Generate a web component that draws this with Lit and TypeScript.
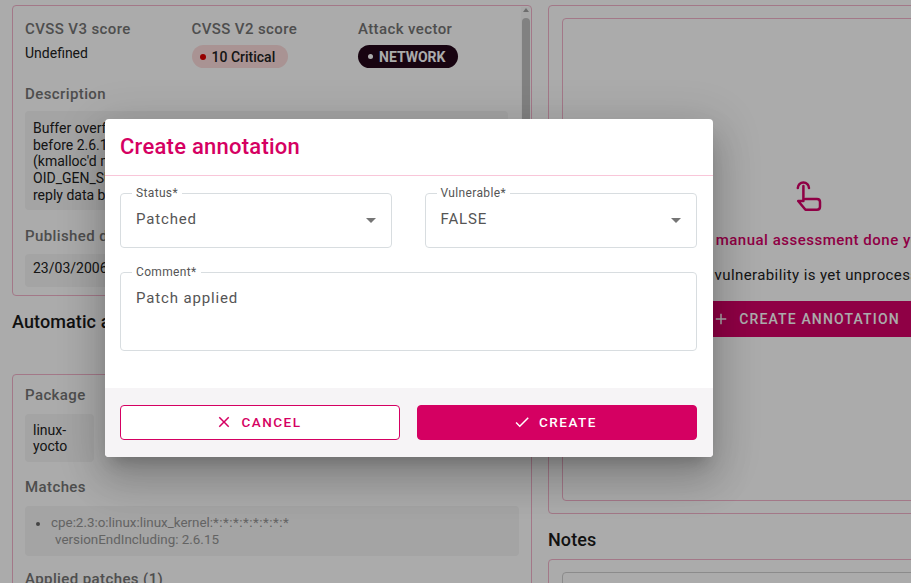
import { LitElement, html, css } from "lit";
import { customElement } from "lit/decorators.js";

const DESCRIPTION = [
  "Buffer overflow in the RNDIS gadget driver in the Linux kernel",
  "before 2.6.16 allows attackers to cause memory corruption",
  "(kmalloc'd memory) via a remote NDIS response to",
  "OID_GEN_SUPPORTED_LIST, which causes the kernel to copy",
  "reply data beyond the end of the allocated buffer.",
];

@customElement("app-root")
export class AppRoot extends LitElement {
  static styles = css`
    :host {
      display: block;
      position: relative;
      width: 911px;
      height: 583px;
      overflow: hidden;
      background: #fff;
      font-family: Roboto, "Liberation Sans", sans-serif;
      font-size: 14px;
      color: #212121;
    }
    * { box-sizing: border-box; }
    .page {
      display: grid;
      grid-template-columns: 520px 520px;
      column-gap: 16px;
      padding: 5px 0 0 12px;
      width: 1100px;
    }
    .col { display: flex; flex-direction: column; }
    .card {
      border: 1px solid #f3b4cb;
      border-radius: 4px;
    }
    .card1 {
      height: 291px;
      display: flex;
      overflow: hidden;
    }
    .scroll-content { flex: 1; padding: 13px 12px 0 12px; min-width: 0; }
    .scrollbar {
      width: 9px;
      margin: 1px 1px 0 0;
      background: #fafafa;
      display: flex;
      flex-direction: column;
      align-items: center;
    }
    .sb-arrow {
      margin-top: 1px;
      width: 0;
      height: 0;
      border-left: 3.5px solid transparent;
      border-right: 3.5px solid transparent;
      border-bottom: 4px solid #a3a3a3;
    }
    .sb-thumb {
      margin-top: 6px;
      width: 8px;
      height: 180px;
      border-radius: 4px;
      background: #c1c1c1;
    }
    .scores {
      display: grid;
      grid-template-columns: 166.5px 166.5px 1fr;
      height: 65px;
    }
    .label {
      font-size: 15px;
      line-height: 20px;
      color: #757575;
      font-weight: 500;
      letter-spacing: 0.4px;
    }
    .undefined { font-size: 14px; line-height: 18px; margin-top: 5px; color: #212121; }
    .chip {
      display: inline-flex;
      align-items: center;
      height: 23px;
      margin-top: 6px;
      border-radius: 12px;
      font-size: 14px;
      font-weight: 500;
      padding: 0 13px 0 8px;
      gap: 6px;
    }
    .chip .dot { width: 6px; height: 6px; border-radius: 50%; }
    .chip.crit { background: #fcdcdc; color: #212121; }
    .chip.crit .dot { background: #e00000; }
    .chip.net { background: #24061a; color: #fff; font-weight: 700; padding: 0 13px 0 10px; }
    .chip.net .dot { background: #fff; width: 5px; height: 5px; }
    .box {
      background: #f5f5f5;
      border-radius: 4px;
      font-size: 14px;
      line-height: 16.7px;
      padding: 9px 8px;
      color: #212121;
    }
    .desc { margin-top: 7px; height: 99px; margin-right: 1px; }
    .pub { margin-top: 16px; }
    .date { margin-top: 8px; height: 33px; width: 120px; padding-top: 6px; }
    .h2 {
      font-size: 18px;
      line-height: 24px;
      font-weight: 500;
      color: #1a1a1a;
      letter-spacing: 0.1px;
    }
    .auto-h { margin: 14px 0 0 0; }
    .card2 { margin-top: 40px; padding: 10px 12px 12px; height: 260px; }
    .pkg { margin-top: 9px; width: 69px; height: 48px; padding: 7.5px 8px; }
    .m-label { margin-top: 15px; }
    .matches {
      margin-top: 9px;
      height: 50px;
      padding: 9px 8px 0 26px;
      color: #949494;
      font-size: 13.4px;
    }
    .matches ul { margin: 0; padding: 0; list-style: none; position: relative; }
    .matches li::before {
      content: "";
      display: inline-block;
      position: absolute;
      left: -15px;
      top: 7px;
      width: 4px;
      height: 4px;
      border-radius: 50%;
      background: #666;
    }
    .stars { letter-spacing: 0.5px; }
    .ver { display: block; padding-left: 4px; }
    .patches { margin-top: 13px; }

    .r-outer { height: 509px; padding: 12px 13px; }
    .r-inner {
      height: 483px;
      border: 1px solid #f3b4cb;
      border-radius: 4px;
      display: flex;
      flex-direction: column;
      align-items: center;
      padding-top: 161px;
    }
    .touch {
      width: 32px;
      height: 32px;
      display: block;
      fill: none;
      stroke: #d50067;
      stroke-width: 2.5;
      stroke-linejoin: round;
      stroke-linecap: round;
    }
    .ph-title {
      margin-top: 18px;
      font-size: 15px;
      line-height: 20px;
      font-weight: 500;
      color: #d50067;
      letter-spacing: 0.5px;
      white-space: nowrap;
    }
    .ph-text {
      margin-top: 15px;
      font-size: 15px;
      line-height: 20px;
      color: #212121;
      letter-spacing: 0.4px;
      white-space: nowrap;
    }
    .ph-btn {
      margin-top: 16px;
      height: 36px;
      background: #d50067;
      color: #fff;
      border: 0;
      border-radius: 4px;
      padding: 0 20px 0 16px;
      display: flex;
      align-items: center;
      gap: 9px;
      font: 500 14px Roboto, sans-serif;
      letter-spacing: 1.15px;
      white-space: nowrap;
    }
    .ph-btn svg { width: 18px; height: 18px; fill: #fff; }
    .notes-h { margin-top: 14px; }
    .notes-card { margin-top: 7px; padding: 12px 13px; height: 100px; }
    .notes-inner { border: 1px solid #d0d0d0; border-radius: 4px; height: 80px; }

    .backdrop { position: absolute; inset: 0; background: rgba(0,0,0,0.33); }
    .modal {
      position: absolute;
      left: 105px;
      top: 119px;
      width: 608px;
      height: 338px;
      background: #fff;
      border-radius: 4px;
      overflow: hidden;
      display: flex;
      flex-direction: column;
    }
    .shadow {
      position: absolute;
      left: 105px;
      top: 119px;
      width: 608px;
      height: 338px;
      border-radius: 4px;
      box-shadow: 0 11px 15px -7px rgba(0,0,0,.2), 0 24px 38px 3px rgba(0,0,0,.14), 0 9px 46px 8px rgba(0,0,0,.12);
    }
    .m-head {
      height: 57px;
      flex: none;
      border-bottom: 1px solid #f9c6d9;
      padding: 0 15px;
      display: flex;
      align-items: center;
    }
    .m-title { font-size: 22px; font-weight: 500; color: #d50062; padding-bottom: 1px; letter-spacing: 0.25px; }
    .m-body {
      flex: 1;
      padding: 17px 15.5px 0 15px;
      display: grid;
      grid-template-columns: 272px 272.5px;
      column-gap: 32.5px;
      row-gap: 24px;
      align-content: start;
    }
    .field {
      position: relative;
      height: 55px;
      border: 1px solid #d8dde0;
      border-radius: 4px;
      padding: 15px 16px 0 15px;
      font-size: 15px;
      line-height: 20px;
      letter-spacing: 0.85px;
      color: #555;
    }
    .field.comment { grid-column: 1 / -1; height: 79px; }
    .f-label {
      position: absolute;
      left: 11px;
      top: -8px;
      padding: 0 4px;
      background: #fff;
      font-size: 12px;
      line-height: 14px;
      letter-spacing: 0.35px;
      color: #555;
    }
    .caret {
      position: absolute;
      right: 15px;
      top: 24px;
      width: 0;
      height: 0;
      border-left: 5px solid transparent;
      border-right: 5px solid transparent;
      border-top: 5px solid #757575;
    }
    .m-foot {
      height: 69px;
      flex: none;
      background: #f6f4f6;
      padding: 17px 16px 0 15px;
      display: grid;
      grid-template-columns: 280px 280px;
      column-gap: 17px;
      align-content: start;
    }
    .btn {
      height: 35px;
      border-radius: 4px;
      display: flex;
      align-items: center;
      justify-content: center;
      gap: 8px;
      font: 500 13.5px Roboto, sans-serif;
      letter-spacing: 1.5px;
      border: 1px solid #d50062;
      padding-bottom: 1px;
    }
    .btn svg { width: 18px; height: 18px; }
    .btn.cancel { background: #fff; color: #d50062; padding-right: 3px; }
    .btn.cancel svg { fill: #d50062; }
    .btn.create { background: #d50062; color: #fff; padding-right: 4px; }
    .btn.create svg { fill: #fff; }
  `;

  render() {
    return html`
      <div class="page">
        <div class="col">
          <div class="card card1">
            <div class="scroll-content">
              <div class="scores">
                <div>
                  <div class="label">CVSS V3 score</div>
                  <div class="undefined">Undefined</div>
                </div>
                <div>
                  <div class="label">CVSS V2 score</div>
                  <div class="chip crit"><span class="dot"></span>10 Critical</div>
                </div>
                <div>
                  <div class="label">Attack vector</div>
                  <div class="chip net"><span class="dot"></span>NETWORK</div>
                </div>
              </div>
              <div class="label">Description</div>
              <div class="box desc">${DESCRIPTION.map((l) => html`<div>${l}</div>`)}</div>
              <div class="label pub">Published date</div>
              <div class="box date">23/03/2006</div>
            </div>
            <div class="scrollbar">
              <div class="sb-arrow"></div>
              <div class="sb-thumb"></div>
            </div>
          </div>
          <div class="h2 auto-h">Automatic assessment</div>
          <div class="card card2">
            <div class="label">Package</div>
            <div class="box pkg">linux-<br />yocto</div>
            <div class="label m-label">Matches</div>
            <div class="box matches">
              <ul>
                <li>cpe:2.3:o:linux:linux_kernel:<span class="stars">*:*:*:*:*:*:*:*</span><span class="ver">versionEndIncluding: 2.6.15</span></li>
              </ul>
            </div>
            <div class="label patches">Applied patches (1)</div>
          </div>
        </div>
        <div class="col">
          <div class="card r-outer">
            <div class="r-inner">
              <svg class="touch" viewBox="0 0 32 32">
                <path d="M5.8 8A5.6 5.6 0 0 1 17 8" />
                <path d="M11.4 6V21H6.2L13.5 29.8H25Q28 29.8 28 26.8V22Q28 19 25 19H13.5" />
              </svg>
              <div class="ph-title">No manual assessment done yet</div>
              <div class="ph-text">This vulnerability is yet unprocessed</div>
              <button class="ph-btn">
                <svg viewBox="0 0 24 24"><path d="M19 13h-6v6h-2v-6H5v-2h6V5h2v6h6v2z" /></svg>
                CREATE ANNOTATION
              </button>
            </div>
          </div>
          <div class="h2 notes-h">Notes</div>
          <div class="card notes-card"><div class="notes-inner"></div></div>
        </div>
      </div>

      <div class="backdrop"></div>
      <div class="shadow"></div>
      <div class="modal">
        <div class="m-head"><div class="m-title">Create annotation</div></div>
        <div class="m-body">
          <div class="field"><span class="f-label">Status*</span>Patched<span class="caret"></span></div>
          <div class="field"><span class="f-label">Vulnerable*</span>FALSE<span class="caret"></span></div>
          <div class="field comment"><span class="f-label">Comment*</span>Patch applied</div>
        </div>
        <div class="m-foot">
          <div class="btn cancel">
            <svg viewBox="0 0 24 24"><path d="M19 6.41 17.59 5 12 10.59 6.41 5 5 6.41 10.59 12 5 17.59 6.41 19 12 13.41 17.59 19 19 17.59 13.41 12z" /></svg>
            CANCEL
          </div>
          <div class="btn create">
            <svg viewBox="0 0 24 24"><path d="M9 16.17 4.83 12l-1.42 1.41L9 19 21 7l-1.41-1.41z" /></svg>
            CREATE
          </div>
        </div>
      </div>
    `;
  }
}
